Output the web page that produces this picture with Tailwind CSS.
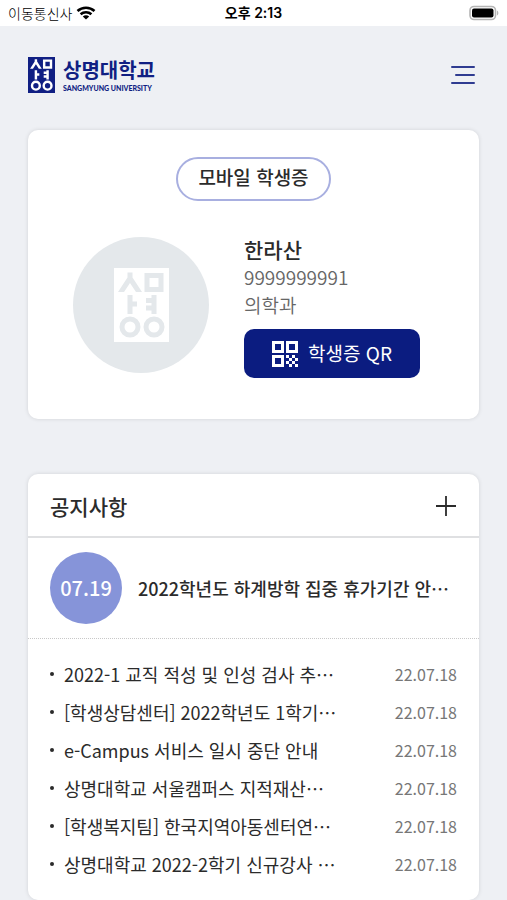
<!DOCTYPE html>
<html lang="ko">
<head>
<meta charset="utf-8">
<meta name="viewport" content="width=device-width, initial-scale=1">
<title>상명대학교 모바일 학생증</title>
<script src="https://cdn.jsdelivr.net/npm/@tailwindcss/browser@4"></script>
</head>
<body class="min-h-screen bg-[#eef0f4] font-['Noto_Sans_CJK_KR',sans-serif] text-[#2b2b2b]">
<svg class="hidden" aria-hidden="true">
  <symbol id="emblem" viewBox="0 0 54 74">
    <g fill="none" stroke="currentColor" stroke-width="5">
      <path d="M13 4.500 H18 V9.500 L27.500 24 H21.500 L15.500 15 L9.500 24 H3.500 L13 9.500 Z" fill="currentColor" stroke="none"/>
      <path d="M32.500 7.500 H46.500 V21.500 H32.500 Z"/>
      <path d="M15.500 27 V46 M16 36 H22.500"/>
      <path d="M39.500 27 V46 M31.500 32.500 H39 M31.500 40 H39"/>
      <circle cx="15.500" cy="59" r="8"/>
      <circle cx="39.500" cy="59" r="8"/>
    </g>
  </symbol>
</svg>

<div class="flex h-[26px] items-center bg-white px-2 text-[14px] leading-none text-black">
  <div class="flex flex-1 items-center gap-1">
    <span class="font-light">이동통신사</span>
    <svg class="h-[14px] w-5" viewBox="0 0 20 14" fill="none" stroke="#000" stroke-width="2.600" aria-hidden="true">
      <path d="M1.500 5 C6.300 .6 13.700 .6 18.500 5"/>
      <path d="M4.600 8.300 C7.700 5.600 12.300 5.600 15.400 8.300"/>
      <path d="M10 13.500 L6.800 10.400 C8.600 8.900 11.400 8.900 13.200 10.400 Z" fill="#000" stroke="none"/>
    </svg>
  </div>
  <span class="font-['Inter','Noto_Sans_CJK_KR',sans-serif] font-semibold">오후 2:13</span>
  <div class="flex flex-1 justify-end">
    <svg class="h-4 w-8" viewBox="0 0 32 16" aria-hidden="true">
      <rect x="3" y="1.500" width="25.500" height="13" rx="4" fill="#fff" stroke="#b5b5b5" stroke-width="1.600"/>
      <rect x="5" y="3.500" width="21.500" height="9" rx="2" fill="#000"/>
      <path d="M30 5.500 C31.800 6.300 31.800 9.700 30 10.500 Z" fill="#b5b5b5"/>
    </svg>
  </div>
</div>

<header class="flex h-[98px] items-center justify-between px-7">
  <a href="#" class="flex items-center gap-2 text-[#101f83]">
    <span class="flex h-9 w-[27px] items-center justify-center bg-[#101f83] text-white">
      <svg class="h-9 w-[27px]" aria-hidden="true"><use href="#emblem"/></svg>
    </span>
    <span class="flex flex-col">
      <span class="text-[20px] leading-[26px] font-bold">상명대학교</span>
      <span class="font-['Lato',sans-serif] text-[7px] leading-[10px] font-black">SANGMYUNG UNIVERSITY</span>
    </span>
  </a>
  <button type="button" aria-label="메뉴" class="mr-1">
    <svg class="h-5 w-6" viewBox="0 0 24 20" stroke="#2f3c91" stroke-width="2" stroke-linecap="round" aria-hidden="true">
      <path d="M1 2 H23 M5 10 H23 M1 18 H23"/>
    </svg>
  </button>
</header>

<main class="flex flex-col gap-[55px] px-7 pt-[6px]">
  <section class="flex flex-col items-center rounded-[10px] bg-white pt-[27px] pb-[41px] shadow-[0_0_4px_rgba(0,0,0,0.12)]">
    <h1 class="flex h-11 items-center rounded-full border-2 border-[#a8afe0] px-5 pb-[6px] text-[19px] leading-none font-medium">모바일 학생증</h1>
    <div class="mt-[34px] flex items-start gap-[35px] pr-[14px]">
      <div class="mt-[2px] flex size-[136px] items-center justify-center rounded-full bg-[#e4e8eb]">
        <div class="bg-white text-[#e4e8eb]">
          <svg class="h-[74px] w-[55px]" aria-hidden="true"><use href="#emblem"/></svg>
        </div>
      </div>
      <div class="flex flex-col">
        <p class="text-[21px] leading-7 font-medium">한라산</p>
        <p class="text-[19px] leading-7 font-[350] text-[#666]">9999999991</p>
        <p class="text-[19px] leading-7 font-[350] text-[#666]">의학과</p>
        <button type="button" class="mt-[10px] flex h-[49px] w-44 items-center justify-center gap-[10px] rounded-[10px] bg-[#0b1c80] text-[19px] text-white">
          <svg class="size-[26px]" viewBox="0 0 26 26" fill="#fff" aria-hidden="true">
            <path fill-rule="evenodd" d="M0 0H12V12H0Z M3 3V9H9V3Z M14 0H26V12H14Z M17 3V9H23V3Z M0 14H12V26H0Z M3 17V23H9V17Z"/>
            <path d="M14 14h3v3h-3z M20 14h3v3h-3z M17 17h3v3h-3z M23 17h3v3h-3z M14 20h3v3h-3z M20 20h3v3h-3z M17 23h3v3h-3z M23 23h3v3h-3z"/>
          </svg>
          <span>학생증 QR</span>
        </button>
      </div>
    </div>
  </section>

  <section class="rounded-[10px] bg-white shadow-[0_0_4px_rgba(0,0,0,0.12)]">
    <div class="flex h-16 items-center justify-between border-b-2 border-[#dfe0e2] px-[22px] pt-[2px]">
      <h2 class="text-[21px] leading-none font-medium">공지사항</h2>
      <a href="#" aria-label="공지사항 더보기">
        <svg class="size-[22px]" viewBox="0 0 22 22" stroke="#2b2b2b" stroke-width="1.800" aria-hidden="true"><path d="M1 11 H21 M11 1 V21"/></svg>
      </a>
    </div>
    <a href="#" class="flex h-[101px] items-center gap-4 border-b border-dotted border-[#c8c8c8] px-[22px] whitespace-nowrap">
      <span class="flex size-[72px] shrink-0 items-center justify-center rounded-full bg-[#8694d9] text-[20px] font-medium text-white">07.19</span>
      <span class="text-[18px] font-medium">2022학년도 하계방학 집중 휴가기간 안…</span>
    </a>
    <ul class="px-[22px] pt-4 pb-[17px] text-[18px]">
      <li class="flex h-[38px] items-center gap-[10px]"><span class="size-1 rounded-full bg-[#2b2b2b]"></span><a href="#" class="flex-1 whitespace-nowrap">2022-1 교직 적성 및 인성 검사 추…</a><time class="text-[16px] text-[#777]">22.07.18</time></li>
      <li class="flex h-[38px] items-center gap-[10px]"><span class="size-1 rounded-full bg-[#2b2b2b]"></span><a href="#" class="flex-1 whitespace-nowrap">[학생상담센터] 2022학년도 1학기…</a><time class="text-[16px] text-[#777]">22.07.18</time></li>
      <li class="flex h-[38px] items-center gap-[10px]"><span class="size-1 rounded-full bg-[#2b2b2b]"></span><a href="#" class="flex-1 whitespace-nowrap">e-Campus 서비스 일시 중단 안내</a><time class="text-[16px] text-[#777]">22.07.18</time></li>
      <li class="flex h-[38px] items-center gap-[10px]"><span class="size-1 rounded-full bg-[#2b2b2b]"></span><a href="#" class="flex-1 whitespace-nowrap">상명대학교 서울캠퍼스 지적재산…</a><time class="text-[16px] text-[#777]">22.07.18</time></li>
      <li class="flex h-[38px] items-center gap-[10px]"><span class="size-1 rounded-full bg-[#2b2b2b]"></span><a href="#" class="flex-1 whitespace-nowrap">[학생복지팀] 한국지역아동센터연…</a><time class="text-[16px] text-[#777]">22.07.18</time></li>
      <li class="flex h-[38px] items-center gap-[10px]"><span class="size-1 rounded-full bg-[#2b2b2b]"></span><a href="#" class="flex-1 whitespace-nowrap">상명대학교 2022-2학기 신규강사 …</a><time class="text-[16px] text-[#777]">22.07.18</time></li>
    </ul>
  </section>
</main>
</body>
</html>
